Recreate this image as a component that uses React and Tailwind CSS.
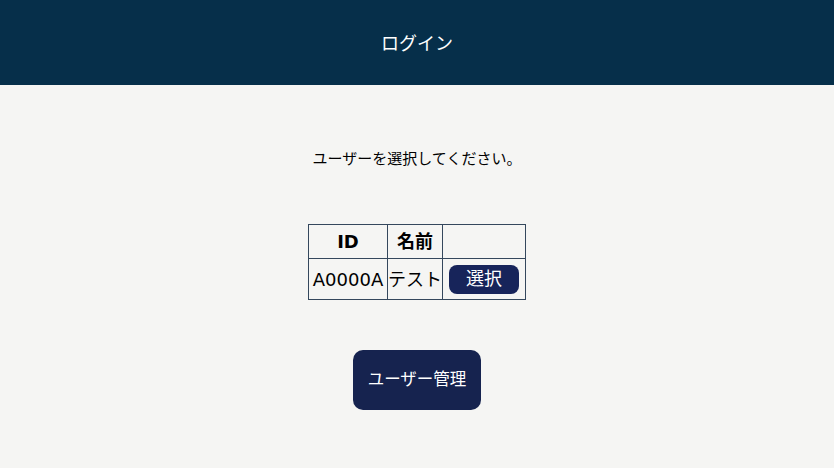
export default function App() {
  const font = { fontFamily: '"DejaVu Sans", "Noto Sans CJK JP", sans-serif' };
  return (
    <div className="min-h-[468px] bg-[#f5f5f3] text-black" style={font}>
      <header className="h-[85px] bg-[#062f4a] flex items-center justify-center pt-[2px]">
        <h1 className="text-[18px] leading-[27px] text-white">ログイン</h1>
      </header>
      <main className="flex flex-col items-center">
        <p className="mt-[62px] text-[15px] leading-[24px]">ユーザーを選択してください。</p>
        <table className="mt-[53px] border-collapse border border-[#34475c] text-[18px]">
          <thead>
            <tr className="h-[34px]">
              <th className="border border-[#34475c] w-[79px] font-bold">ID</th>
              <th className="border border-[#34475c] w-[55px] font-bold">名前</th>
              <th className="border border-[#34475c] w-[83px]"></th>
            </tr>
          </thead>
          <tbody>
            <tr className="h-[41px]">
              <td className="border border-[#34475c] text-center px-0">A0000A</td>
              <td className="border border-[#34475c] text-center">テスト</td>
              <td className="border border-[#34475c] text-center">
                <button className="w-[70px] h-[29px] rounded-[8px] bg-[#17245a] text-white text-[18px] leading-none align-middle">選択</button>
              </td>
            </tr>
          </tbody>
        </table>
        <button className="mt-[50px] w-[128px] h-[60px] rounded-[10px] bg-[#16234f] text-white text-[16.5px]">ユーザー管理</button>
      </main>
    </div>
  );
}
